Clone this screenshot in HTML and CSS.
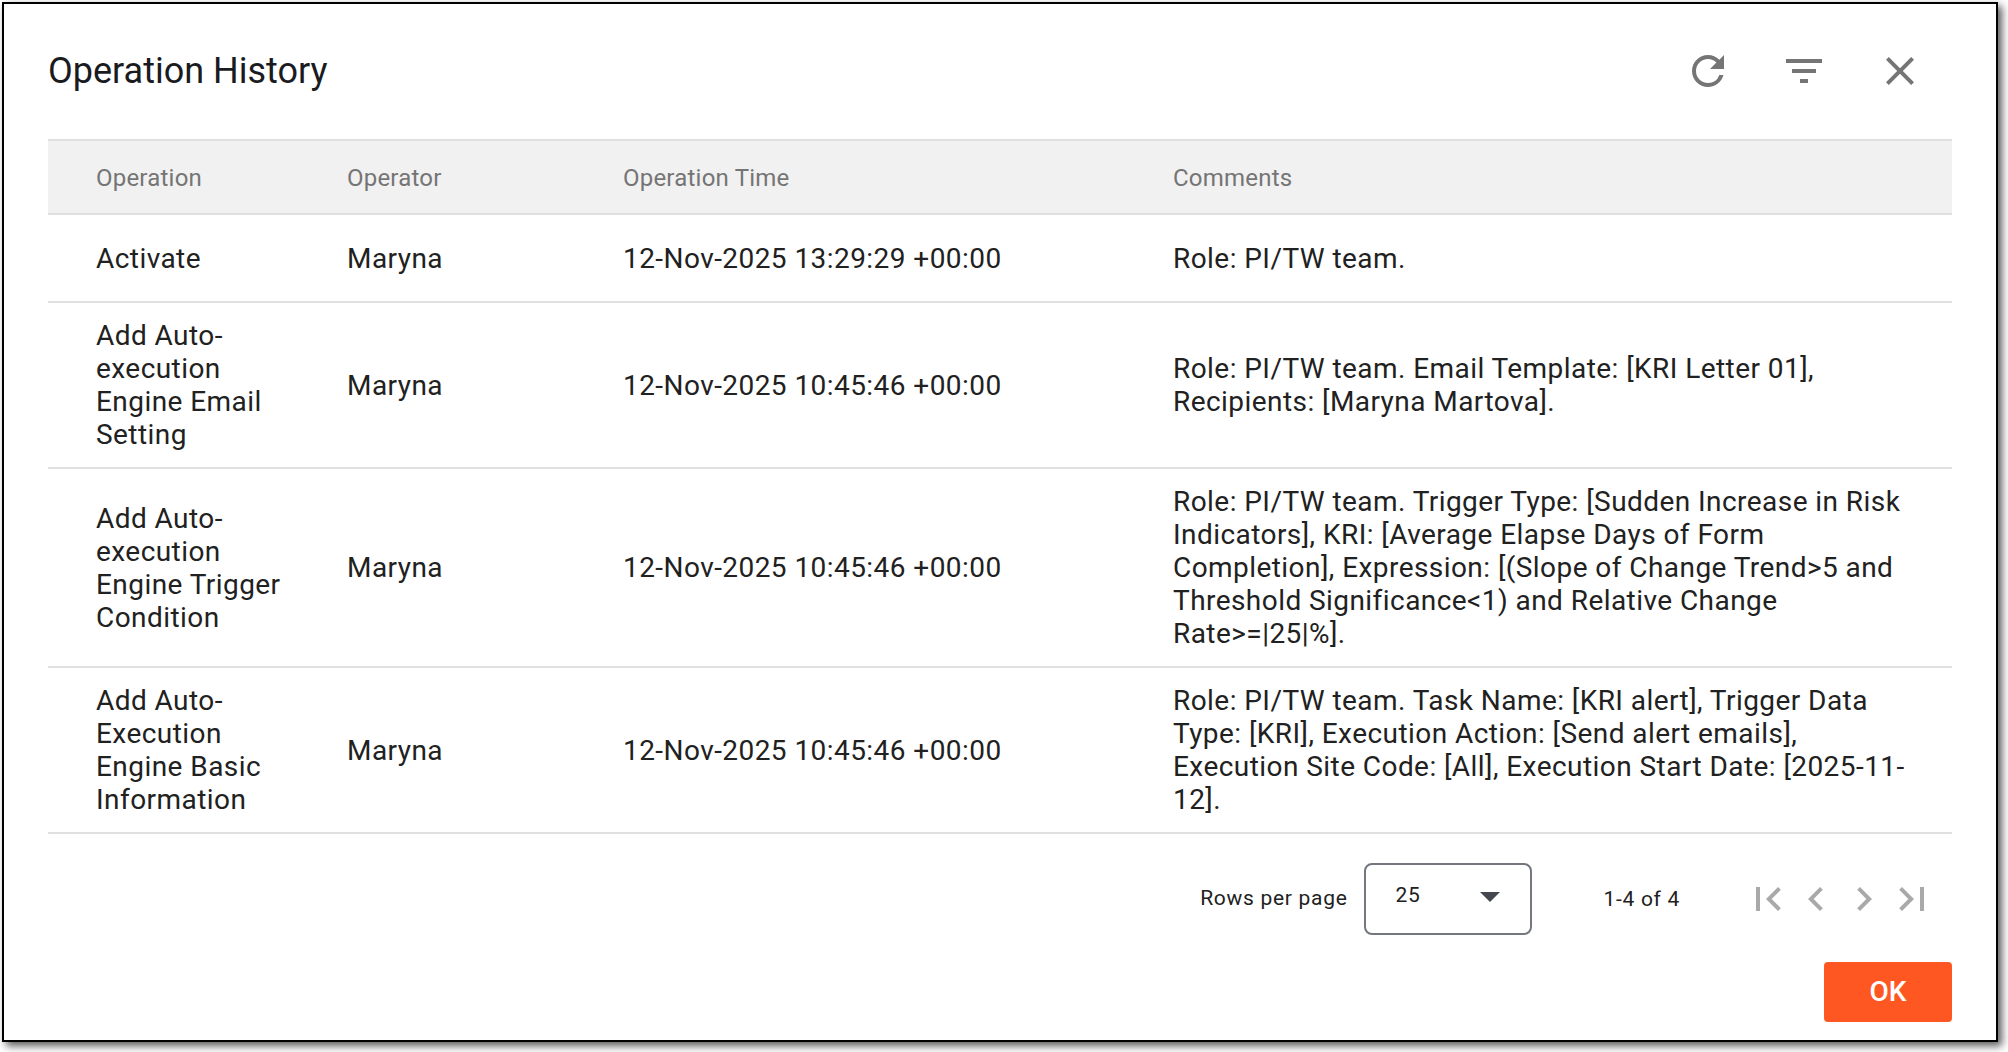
FILE: index.html
```html
<!DOCTYPE html>
<html lang="en">

<head>
	<meta charset="utf-8">
	<title>Operation History</title>
	<link rel="stylesheet" href="styles.css">
</head>
<body>
<div class="dialog">
	<div class="dialog-header">
		<h1>Operation History</h1>
		<div class="actions">
			<svg class="icon" viewBox="0 0 24 24"><path d="M17.65 6.35A7.958 7.958 0 0 0 12 4c-4.42 0-7.99 3.58-7.99 8s3.57 8 7.99 8c3.73 0 6.84-2.55 7.73-6h-2.08A5.99 5.99 0 0 1 12 18c-3.31 0-6-2.69-6-6s2.69-6 6-6c1.66 0 3.14.69 4.22 1.78L13 11h7V4l-2.35 2.35z"/></svg>
			<svg class="icon" viewBox="0 0 24 24"><path d="M10 18h4v-2h-4v2zM3 6v2h18V6H3zm3 7h12v-2H6v2z"/></svg>
			<svg class="icon" viewBox="0 0 24 24"><path d="M19 6.41L17.59 5 12 10.59 6.41 5 5 6.41 10.59 12 5 17.59 6.41 19 12 13.41 17.59 19 19 17.59 13.41 12z"/></svg>
		</div>
	</div>

	<table class="history">
		<colgroup>
			<col class="col-operation">
			<col class="col-operator">
			<col class="col-time">
			<col>
		</colgroup>
		<thead>
			<tr>
				<th>Operation</th>
				<th>Operator</th>
				<th>Operation Time</th>
				<th>Comments</th>
			</tr>
		</thead>
		<tbody>
			<tr>
				<td>Activate</td>
				<td>Maryna</td>
				<td>12-Nov-2025 13:29:29 +00:00</td>
				<td>Role: PI/TW team.</td>
			</tr>
			<tr>
				<td>Add Auto-execution Engine Email Setting</td>
				<td>Maryna</td>
				<td>12-Nov-2025 10:45:46 +00:00</td>
				<td>Role: PI/TW team. Email Template: [KRI Letter 01], Recipients: [Maryna Martova].</td>
			</tr>
			<tr>
				<td>Add Auto-execution Engine Trigger Condition</td>
				<td>Maryna</td>
				<td>12-Nov-2025 10:45:46 +00:00</td>
				<td>Role: PI/TW team. Trigger Type: [Sudden Increase in Risk Indicators], KRI: [Average Elapse Days of Form Completion], Expression: [(Slope of Change Trend&gt;5 and Threshold Significance&lt;1) and Relative Change Rate&gt;=|25|%].</td>
			</tr>
			<tr>
				<td>Add Auto-Execution Engine Basic Information</td>
				<td>Maryna</td>
				<td>12-Nov-2025 10:45:46 +00:00</td>
				<td>Role: PI/TW team. Task Name: [KRI alert], Trigger Data Type: [KRI], Execution Action: [Send alert emails], Execution Site Code: [All], Execution Start Date: [2025-11-12].</td>
			</tr>
		</tbody>
	</table>

	<div class="pager">
		<span class="pager-label">Rows per page</span>
		<div class="page-size">
			<span>25</span>
			<svg class="arrow" viewBox="0 0 10 5"><path d="M0 0l5 5 5-5z"/></svg>
		</div>
		<span class="range">1-4 of 4</span>
		<div class="pager-nav">
			<svg class="icon" viewBox="0 0 24 24"><path d="M18.41 16.59L13.82 12l4.59-4.59L17 6l-6 6 6 6zM6 6h2v12H6z"/></svg>
			<svg class="icon" viewBox="0 0 24 24"><path d="M15.41 7.41L14 6l-6 6 6 6 1.41-1.41L10.83 12z"/></svg>
			<svg class="icon" viewBox="0 0 24 24"><path d="M10 6L8.59 7.41 13.17 12l-4.58 4.59L10 18l6-6z"/></svg>
			<svg class="icon" viewBox="0 0 24 24"><path d="M5.59 7.41L10.18 12l-4.59 4.59L7 18l6-6-6-6zM16 6h2v12h-2z"/></svg>
		</div>
	</div>

	<div class="dialog-footer">
		<button class="ok">OK</button>
	</div>
</div>
</body>

</html>
```
FILE: styles.css
```css
* {
	box-sizing: border-box;
}

body {
	margin: 0;
	padding: 2px;
	height: 1052px;
	overflow: hidden;
	background: #fff;
	font-family: Roboto, "Liberation Sans", sans-serif;
	color: #212121;
}

.dialog {
	width: 1996px;
	height: 1040px;
	padding: 0 44px;
	border: 2px solid #000;
	background: #fff;
	box-shadow: 4px 4px 8px rgba(0, 0, 0, 0.65);
}

.dialog-header {
	display: flex;
	justify-content: space-between;
	align-items: center;
	height: 134px;
	margin-bottom: 1px;
	padding-right: 28px;
}

h1 {
	margin: 0;
	font-size: 36px;
	font-weight: 400;
	line-height: 48px;
	color: #1a1b1f;
}

.actions {
	display: flex;
	gap: 48px;
}

.icon {
	display: block;
	width: 48px;
	height: 48px;
	fill: #757575;
}

.history {
	width: 1904px;
	table-layout: fixed;
	border-collapse: separate;
	border-spacing: 0;
}

.col-operation {
	width: 299px;
}

.col-operator {
	width: 276px;
}

.col-time {
	width: 550px;
}

th {
	height: 76px;
	padding: 2px 0 0;
	border-top: 2px solid #e0e0e0;
	border-bottom: 2px solid #e0e0e0;
	background: #f1f1f1;
	font-size: 24px;
	font-weight: 400;
	letter-spacing: 0.22px;
	text-align: left;
	color: #757575;
}

td {
	height: 88px;
	padding: 16px 44px 16px 0;
	border-bottom: 2px solid #e0e0e0;
	font-size: 28px;
	line-height: 33px;
	letter-spacing: 0.44px;
}

th:first-child,
td:first-child {
	padding-left: 48px;
}

.pager {
	display: flex;
	justify-content: flex-end;
	align-items: center;
	height: 128px;
	padding-top: 2px;
	font-size: 21px;
	letter-spacing: 0.7px;
}

.pager-label {
	padding-bottom: 2px;
}

.page-size {
	display: flex;
	justify-content: space-between;
	align-items: center;
	width: 168px;
	height: 72px;
	margin: 0 71px 0 17px;
	padding: 0 30px 8px 29px;
	border: 2px solid #74777f;
	border-radius: 8px;
}

.arrow {
	width: 20px;
	height: 10px;
	margin-top: 4px;
	fill: #44474e;
}

.pager-nav {
	display: flex;
	margin: 0 16px 0 64px;
}

.pager-nav .icon {
	fill: #a9a9ab;
}

.dialog-footer {
	display: flex;
	justify-content: flex-end;
}

.ok {
	width: 128px;
	height: 60px;
	padding: 0 0 2px;
	border: 0;
	border-radius: 4px;
	background: #ff5722;
	font-family: inherit;
	font-size: 28px;
	font-weight: 500;
	color: #fff;
}
```
